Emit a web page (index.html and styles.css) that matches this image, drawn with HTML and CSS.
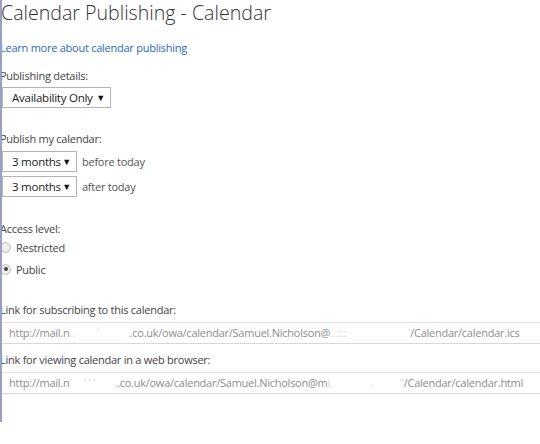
FILE: index.html
```html
<!DOCTYPE html>
<html>
<head>
<meta charset="utf-8">
<link rel="stylesheet" href="styles.css">
</head>
<body>
<div class="page">
  <h1 class="title">Calendar Publishing - Calendar</h1>
  <a class="learn" href="#">Learn more about calendar publishing</a>

  <div class="label lbl-details">Publishing details:</div>
  <div class="select sel-wide"><span class="sel-text">Availability Only</span><span class="arrow">▼</span></div>

  <div class="label lbl-publish">Publish my calendar:</div>
  <div class="row">
    <div class="select sel-small"><span class="sel-text">3 months</span><span class="arrow">▼</span></div>
    <span class="after">before today</span>
  </div>
  <div class="row row2">
    <div class="select sel-small"><span class="sel-text">3 months</span><span class="arrow">▼</span></div>
    <span class="after">after today</span>
  </div>

  <div class="label lbl-access">Access level:</div>
  <div class="radio-row"><span class="radio"></span><span>Restricted</span></div>
  <div class="radio-row radio-row2"><span class="radio checked"></span><span>Public</span></div>

  <div class="label lbl-link1">Link for subscribing to this calendar:</div>
  <div class="url">http://mail.n<span class="blur">..</span><span class="gap g1"></span><span class="blur">'</span><span class="gap g2"></span><span class="blur">.</span>.co.uk/owa/calendar/Samuel.Nicholson@<span class="blur">...:::</span><span class="gap g3"></span><span class="blur">'</span>/Calendar/calendar.ics</div>

  <div class="label lbl-link2">Link for viewing calendar in a web browser:</div>
  <div class="url">http://mail.n<span class="blur">'</span><span class="gap g4"></span><span class="blur">' ' '</span><span class="gap g5"></span><span class="blur">.</span>.co.uk/owa/calendar/Samuel.Nicholson@m<span class="blur">i.</span><span class="gap g6"></span><span class="blur">.</span><span class="gap g7"></span><span class="blur">''</span>/Calendar/calendar.html</div>
</div>
</body>
</html>
```

FILE: styles.css
```css
html, body {
  margin: 0;
  padding: 0;
  background: #fff;
}
body {
  font-family: "Open Sans", "Noto Sans", sans-serif;
  font-size: 11px;
  letter-spacing: -0.25px;
  color: #444;
}
.page {
  position: relative;
  height: 422px;
  overflow: hidden;
}
.page::before {
  content: "";
  position: absolute;
  left: 0;
  top: 0;
  bottom: 0;
  width: 2px;
  background: #9aa0c2;
  z-index: 2;
}
.title {
  margin: 0;
  padding-left: 1px;
  font-weight: 300;
  font-size: 19.6px;
  line-height: 26px;
  letter-spacing: 0;
  color: #333;
  white-space: nowrap;
}
.learn {
  display: block;
  margin-top: 15px;
  color: #2a6ab5;
  text-decoration: none;
  line-height: 14px;
}
.label {
  line-height: 14px;
}
.lbl-details { margin-top: 14px; }
.select {
  display: flex;
  align-items: center;
  justify-content: space-between;
  border: 1px solid #b4b4b4;
  background: #fff;
  color: #1a1a1a;
  height: 21px;
  box-sizing: border-box;
  padding: 0 5px 0 9px;
  font-size: 11.5px;
  margin-left: 2px;
}
.sel-wide {
  width: 109px;
  margin-top: 4px;
}
.sel-small {
  width: 75px;
}
.arrow {
  font-size: 9px;
  color: #111;
}
.lbl-publish { margin-top: 24px; }
.row {
  display: flex;
  align-items: center;
  gap: 5px;
  margin-top: 5px;
}
.row2 { margin-top: 4px; }
.after {
  color: #555;
}
.lbl-access { margin-top: 25px; }
.radio-row {
  display: flex;
  align-items: center;
  gap: 5px;
  margin-top: 4px;
  height: 14px;
}
.radio-row2 { margin-top: 8px; }
.radio {
  width: 11px;
  height: 11px;
  border-radius: 50%;
  border: 1px solid #c4c4c4;
  background: radial-gradient(circle, #f6f6f6 0, #e0e0e0 100%);
  box-sizing: border-box;
  position: relative;
}
.radio.checked::after {
  content: "";
  position: absolute;
  left: 2.5px;
  top: 2.5px;
  width: 4px;
  height: 4px;
  border-radius: 50%;
  background: #444;
}
.lbl-link1 { margin-top: 27px; }
.lbl-link2 { margin-top: 9px; }
.url {
  margin-top: 5px;
  height: 22px;
  line-height: 20px;
  border-top: 1px solid #e2e2e2;
  border-bottom: 1px solid #d8d8d8;
  border-left: 1px solid #eee;
  box-sizing: border-box;
  padding-left: 8px;
  color: #8e8e8e;
  white-space: nowrap;
  width: 560px;
}
.blur { color: #d6d6d6; }
.gap { display: inline-block; }
.g1 { width: 22px; }
.g2 { width: 28px; }
.g3 { width: 62px; }
.g4 { width: 12px; }
.g5 { width: 19px; }
.g6 { width: 38px; }
.g7 { width: 26px; }
```
